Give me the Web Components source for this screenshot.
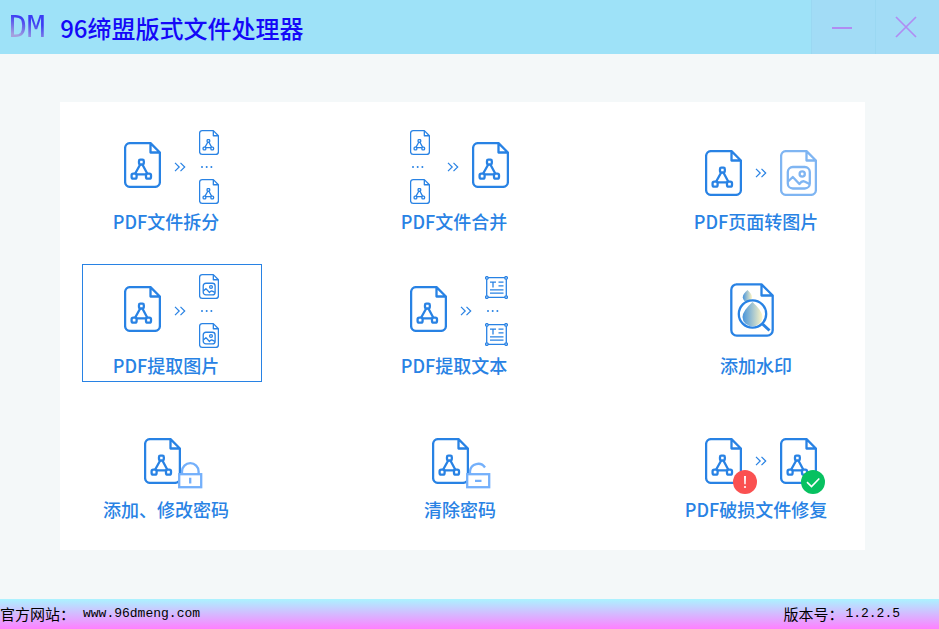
<!DOCTYPE html>
<html lang="zh-CN">
<head>
<meta charset="utf-8">
<title>96缔盟版式文件处理器</title>
<style>
  html, body { height: 100%; margin: 0; }
  body { font-family: "Noto Sans CJK SC", sans-serif; background: #f4f8f9; }
</style>
</head>
<body>
<app-window></app-window>
<script>
const define = (name, render, setup) => customElements.define(name, class extends HTMLElement {
  connectedCallback() {
    if (this.shadowRoot) return;
    this.attachShadow({ mode: 'open' }).innerHTML = render(this);
    if (setup) setup(this);
  }
});

/* Window frame */
define('app-window', () => `
  <style>
    :host { display: flex; flex-direction: column; min-height: 100%; }
    main { flex: 1; padding: 48px 74px 48px 60px; }
  </style>
  <title-bar>96缔盟版式文件处理器</title-bar>
  <main><tool-panel></tool-panel></main>
  <status-bar></status-bar>`);

define('title-bar', () => `
  <style>
    :host { display: flex; height: 54px; background: #9ee2f8; color: #1408f8; }
    .brand { flex: 1; display: flex; align-items: center; padding-left: 9px; gap: 15px; }
    .logo { font: 30px/36px "DejaVu Sans Mono", monospace; color: transparent;
      background: linear-gradient(200deg, #3c3cf4 35%, #a4a0de 75%); background-clip: text; -webkit-background-clip: text; }
    h1 { margin: 0; font-size: 24px; line-height: 36px; font-weight: 500; padding-top: 2px; }
    button { width: 64px; border: 0; border-left: 1px solid #9ad8f2; padding: 0 4px 0 0; background: #a2dcf6; display: grid; place-items: center; }
    svg { stroke: #b08cf2; fill: none; stroke-width: 2; }
  </style>
  <div class="brand"><span class="logo">DM</span><h1><slot></slot></h1></div>
  <button aria-label="最小化"><svg width="22" height="22"><path d="M1 12H21"/></svg></button>
  <button aria-label="关闭"><svg width="22" height="22"><path d="M1 1L21 21M21 1L1 21" stroke-width="1.7"/></svg></button>`);

define('status-bar', () => `
  <style>
    :host { display: flex; justify-content: space-between; align-items: center; height: 30px; padding-right: 39px;
      background: linear-gradient(#abf3ff, #ff80ff); font-size: 15px; line-height: 30px; color: #000; }
    a, .num { font-family: "Liberation Mono", monospace; font-size: 13px; color: inherit; text-decoration: none; }
    .site { display: flex; gap: 8px; }
    .version { display: flex; gap: 2px; }
  </style>
  <span class="site"><span>官方网站：</span><a href="http://www.96dmeng.com">www.96dmeng.com</a></span>
  <span class="version"><span>版本号：</span><span class="num">1.2.2.5</span></span>`);

/* Pictograms */
const pdfMark = `<path d="M16.2 22.5L11.2 31.5M18.4 22.5L23.2 31.5M13 32.4H22"/>
  <rect x="15" y="17.7" width="4.8" height="4.8" rx="1.3"/><rect x="7.6" y="31.6" width="5" height="5" rx="1.7"/><rect x="22" y="31.6" width="5" height="5" rx="1.7"/>`;
const imageMark = `<rect x="7.8" y="17" width="22" height="21.5" rx="5"/><circle cx="22.2" cy="24" r="2.6"/>
  <path d="M8 31.5L12.8 27L19.4 34Q22 30.5 24.5 31.5L29.5 34"/>`;
define('file-icon', el => {
  const small = el.hasAttribute('small');
  return `
  <style>
    :host { display: block; position: relative; }
    svg { display: block; fill: none; stroke: ${el.hasAttribute('pale') ? '#7fb5f2' : '#2882e4'}; stroke-linejoin: round; }
    ::slotted(*) { position: absolute; left: var(--badge-x); top: var(--badge-y); }
  </style>
  <svg width="${small ? 20 : 37}" height="${small ? 25 : 46}" viewBox="0 0 37 46" stroke-width="${small ? 2.4 : 2.3}">
    <path d="M6 1.1H26.5L35.9 10.5V40A5 5 0 0 1 30.9 44.9H6A5 5 0 0 1 1.1 40V6A5 5 0 0 1 6 1.1Z M26.5 1.5V10.5H35.5"/>
    ${el.getAttribute('kind') === 'image' ? imageMark : pdfMark}
  </svg><slot></slot>`;
});

define('text-icon', () => `
  <style>:host { display: block; } svg { display: block; fill: none; stroke: #2882e4; stroke-width: 1.3; }</style>
  <svg width="23" height="23"><path d="M3 1.6H20M3 21.4H20M1.7 3V20M21.3 3V20"/>
    <path d="M5 6.2H11M8 6.2V11.5M13.5 6.2H18.5M13.5 9.8H18.5M5 13.8H18.5M5 17.2H18.5"/>
    <g fill="#fff"><circle cx="1.9" cy="1.9" r="1.3"/><circle cx="21.1" cy="1.9" r="1.3"/><circle cx="1.9" cy="21.1" r="1.3"/><circle cx="21.1" cy="21.1" r="1.3"/></g></svg>`);

define('step-arrow', () => `
  <style>:host { display: block; } svg { display: block; fill: none; stroke: #2882e4; stroke-width: 1.2; }</style>
  <svg width="12" height="10"><path d="M1 .8L5.2 5L1 9.2M6.5 .8L10.7 5L6.5 9.2"/></svg>`);

define('icon-stack', () => `
  <style>:host { display: grid; gap: 11px; } svg { display: block; fill: #2882e4; margin: 0 1px; }</style>
  <slot name="top"></slot>
  <svg width="14" height="2"><circle cx="2" cy="1" r="1"/><circle cx="6.7" cy="1" r="1"/><circle cx="11.4" cy="1" r="1"/></svg>
  <slot name="bottom"></slot>`);

define('lock-badge', el => `
  <style>:host { display: block; } svg { display: block; fill: none; stroke: #74b0fb; stroke-width: 2.3; }</style>
  <svg width="25" height="27"><rect x="1.2" y="12.2" width="22" height="13" fill="#fff"/>
    ${el.hasAttribute('open')
      ? '<path d="M4 12V9A8.2 8.2 0 0 1 19 5.5M9 18.8H15.5"/>'
      : '<path d="M4 12V9.5A8.3 8.3 0 0 1 20.6 9.5V12M12.2 15.8V21.5"/>'}</svg>`);

define('state-badge', el => `
  <style>:host { display: block; } svg { display: block; }</style>
  <svg width="24" height="24">${el.hasAttribute('ok')
    ? '<circle cx="12" cy="12" r="12" fill="#07c160"/><path d="M6 12.2L10.5 16.5L18.3 8.5" fill="none" stroke="#fff" stroke-width="1.6"/>'
    : '<circle cx="12" cy="12" r="12" fill="#fa5151"/><path d="M11 6H13L12.7 14.3H11.3Z" fill="#fff"/><circle cx="12" cy="17" r="1.1" fill="#fff"/>'}</svg>`);

define('watermark-icon', () => `
  <style>:host { display: block; } svg { display: block; fill: none; stroke: #2882e4; stroke-width: 2.3; stroke-linejoin: round; }</style>
  <svg width="44" height="56">
    <defs><linearGradient id="drop"><stop stop-color="#4794dc"/><stop offset="1" stop-color="#fff5c4"/></linearGradient></defs>
    <path d="M6 1.3H31.5L42.7 12.5V47A5.5 5.5 0 0 1 37.2 52.6H6.8A5.5 5.5 0 0 1 1.3 47V6.8A5.5 5.5 0 0 1 6.8 1.3M31.5 1.5V12.5H42.5"/>
    <path d="M17.5 7Q22 11 22 14.3A4.6 4.4 0 0 1 12.8 14.3Q12.8 11 17.5 7Z" fill="url(#drop)" stroke="none"/>
    <circle cx="22.5" cy="31" r="13.7" fill="#fff"/>
    <path d="M22.5 19Q32.5 28 32.5 34A10 9.2 0 0 1 12.5 34Q12.5 28 22.5 19Z" fill="url(#drop)" stroke="none"/>
    <path d="M32.5 41L39.5 47.5" stroke-width="3"/>
  </svg>`);

/* Tool tile: a drawing above its label */
define('tool-tile', () => `
  <style>
    :host { display: block; width: 180px; }
    button { box-sizing: border-box; width: 100%; height: 118px; padding: 3px 0; margin: 0; border: 1px solid transparent; background: none;
      display: flex; flex-direction: column; font: inherit; color: #2882e4; }
    :host([selected]) button { border-color: #2882e4; }
    .scene { box-sizing: border-box; width: 100%; height: 85px; padding-right: 2px; display: flex; gap: 13px; align-items: center; justify-content: center; }
    :host([low]) .scene { padding-top: 12px; }
    :host([shifted]) .scene { padding-right: 20px; }
    .label { box-sizing: border-box; width: 100%; padding-right: 12px; font-size: 18px; line-height: 24px; font-weight: 500; white-space: nowrap; text-align: center; }
    :host([centered]) .label { padding-right: 0; }
  </style>
  <button><span class="scene"><slot></slot></span><span class="label"><slot name="label"></slot></span></button>`);

define('tool-panel', () => `
  <style>
    :host { display: grid; grid-template-columns: 288fr 302fr 180fr; row-gap: 26px; padding: 18px 13px 24px 22px; background: #fff; }
    .raised { margin-bottom: 4px; }
    .composite { padding-right: 18px; --badge-x: 34px; --badge-y: 24px; }
    .broken { --badge-x: 28px; --badge-y: 32px; }
    .fixed { --badge-x: 21px; --badge-y: 32px; }
    .spaced { margin-left: 4px; }
  </style>
  <tool-tile><file-icon class="raised"></file-icon><step-arrow></step-arrow>
    <icon-stack><file-icon small slot="top"></file-icon><file-icon small slot="bottom"></file-icon></icon-stack>
    <span slot="label">PDF文件拆分</span></tool-tile>
  <tool-tile><icon-stack><file-icon small slot="top"></file-icon><file-icon small slot="bottom"></file-icon></icon-stack>
    <step-arrow class="spaced"></step-arrow><file-icon class="raised"></file-icon>
    <span slot="label">PDF文件合并</span></tool-tile>
  <tool-tile low><file-icon></file-icon><step-arrow></step-arrow><file-icon kind="image" pale></file-icon>
    <span slot="label">PDF页面转图片</span></tool-tile>
  <tool-tile selected><file-icon class="raised"></file-icon><step-arrow></step-arrow>
    <icon-stack><file-icon small kind="image" slot="top"></file-icon><file-icon small kind="image" slot="bottom"></file-icon></icon-stack>
    <span slot="label">PDF提取图片</span></tool-tile>
  <tool-tile><file-icon class="raised"></file-icon><step-arrow></step-arrow>
    <icon-stack><text-icon slot="top"></text-icon><text-icon slot="bottom"></text-icon></icon-stack>
    <span slot="label">PDF提取文本</span></tool-tile>
  <tool-tile shifted><watermark-icon></watermark-icon><span slot="label">添加水印</span></tool-tile>
  <tool-tile low><file-icon class="composite"><lock-badge></lock-badge></file-icon>
    <span slot="label">添加、修改密码</span></tool-tile>
  <tool-tile low centered><file-icon class="composite"><lock-badge open></lock-badge></file-icon>
    <span slot="label">清除密码</span></tool-tile>
  <tool-tile low><file-icon class="broken"><state-badge></state-badge></file-icon><step-arrow></step-arrow>
    <file-icon class="fixed"><state-badge ok></state-badge></file-icon>
    <span slot="label">PDF破损文件修复</span></tool-tile>`);
</script>
</body>
</html>
